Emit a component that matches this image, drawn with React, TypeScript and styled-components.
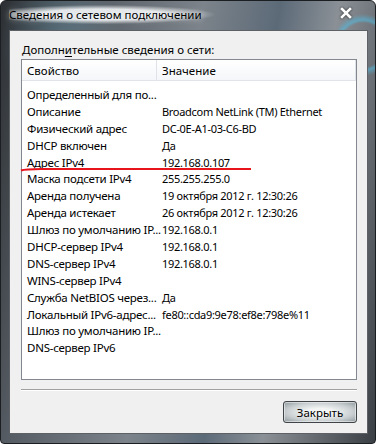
import styled, { createGlobalStyle } from "styled-components";

const GlobalStyle = createGlobalStyle`
  html, body {
    margin: 0;
    padding: 0;
    background: #ffffff;
  }
  * {
    box-sizing: border-box;
  }
`;

const rows: [string, string][] = [
  ["Определенный для по...", ""],
  ["Описание", "Broadcom NetLink (TM) Ethernet"],
  ["Физический адрес", "DC-0E-A1-03-C6-BD"],
  ["DHCP включен", "Да"],
  ["Адрес IPv4", "192.168.0.107"],
  ["Маска подсети IPv4", "255.255.255.0"],
  ["Аренда получена", "19 октября 2012 г. 12:30:26"],
  ["Аренда истекает", "26 октября 2012 г. 12:30:26"],
  ["Шлюз по умолчанию IP...", "192.168.0.1"],
  ["DHCP-сервер IPv4", "192.168.0.1"],
  ["DNS-сервер IPv4", "192.168.0.1"],
  ["WINS-сервер IPv4", ""],
  ["Служба NetBIOS через...", "Да"],
  ["Локальный IPv6-адрес...", "fe80::cda9:9e78:ef8e:798e%11"],
  ["Шлюз по умолчанию IP...", ""],
  ["DNS-сервер IPv6", ""],
];

const Window = styled.div`
  position: relative;
  width: 376px;
  height: 444px;
  display: flex;
  flex-direction: column;
  padding: 0 7px 9px 8px;
  border: 1px solid #1c1f22;
  border-radius: 6px 6px 4px 4px;
  background:
    radial-gradient(circle at 362px 44px, transparent 22px, rgba(80, 190, 230, 0.55) 25px, transparent 31px),
    radial-gradient(ellipse at 60px 40px, rgba(120, 200, 230, 0.25), transparent 60px),
    linear-gradient(100deg, #2c3034 0%, #555b62 18%, #7c838a 45%, #5c6a78 62%, #8a9096 75%, #3a3f45 100%);
  font-family: "Noto Sans", "Open Sans", sans-serif;
  font-size: 11.5px;
  color: #000;
`;

const TitleBar = styled.div`
  height: 29px;
  display: flex;
  align-items: center;
  justify-content: space-between;
`;

const Title = styled.span`
  font-size: 11.5px;
  color: #000;
  padding: 2px 12px 2px 0;
  margin-top: -2px;
  background: radial-gradient(ellipse at 45% 50%, rgba(235, 238, 240, 0.95) 40%, rgba(220, 224, 228, 0) 72%);
  text-shadow: 0 0 6px rgba(255, 255, 255, 0.9);
`;

const CloseIcon = styled.svg`
  width: 12px;
  height: 12px;
  margin-right: 16px;
  margin-top: -6px;
  filter: drop-shadow(0 0 1px #222);
`;

const Client = styled.div`
  flex: 1;
  display: flex;
  flex-direction: column;
  background: #f0f0f0;
  border: 1px solid #5d6166;
  padding: 11px 10px 0 11px;
`;

const Caption = styled.div`
  height: 17px;
  line-height: 16px;
  padding-left: 1px;
  u {
    text-decoration-thickness: 1px;
    text-underline-offset: 2px;
  }
`;

const ListBox = styled.div`
  position: relative;
  height: 321px;
  background: #ffffff;
  border: 1px solid #828790;
`;

const HeaderRow = styled.div`
  display: flex;
  height: 21px;
  background: linear-gradient(#ffffff, #f4f6f9);
  border-bottom: 1px solid #e0e3e8;
`;

const HeaderCell = styled.div<{ $width?: number }>`
  ${(p) => (p.$width ? `width: ${p.$width}px;` : "flex: 1;")}
  line-height: 21px;
  padding-left: 5px;
  border-right: 1px solid #dfe2e7;
  white-space: nowrap;
`;

const Body = styled.div`
  padding-top: 6px;
`;

const Row = styled.div`
  display: flex;
  height: 16.9px;
  line-height: 16.9px;
  white-space: nowrap;
`;

const Cell = styled.div<{ $width?: number; $value?: boolean }>`
  ${(p) => (p.$width ? `width: ${p.$width}px;` : "flex: 1;")}
  padding-left: 5px;
  font-size: ${(p) => (p.$value ? "11px" : "11.5px")};
  letter-spacing: ${(p) => (p.$value ? "-0.3px" : "-0.25px")};
`;

const Annotation = styled.svg`
  position: absolute;
  left: -2px;
  top: 106px;
  width: 232px;
  height: 6px;
`;

const Separator = styled.div`
  margin-top: 9px;
  height: 2px;
  border-top: 1px solid #a0a0a0;
  border-bottom: 1px solid #ffffff;
`;

const Footer = styled.div`
  display: flex;
  justify-content: flex-end;
  padding-top: 10px;
`;

const Button = styled.button`
  width: 74px;
  height: 22px;
  font-family: inherit;
  font-size: 11.5px;
  color: #000;
  border: 1px solid #3e4448;
  border-radius: 3px;
  background: radial-gradient(ellipse at 50% 50%, #f3f5f5 25%, #c9cfd1 65%, #8e979b 100%);
  box-shadow: inset 0 0 0 1px rgba(255, 255, 255, 0.5);
  padding: 0;
`;

export default function App() {
  return (
    <>
      <GlobalStyle />
      <Window>
        <TitleBar>
          <Title>Сведения о сетевом подключении</Title>
          <CloseIcon viewBox="0 0 12 12">
            <path d="M2 2 L10 10 M10 2 L2 10" stroke="#ffffff" strokeWidth="2.6" strokeLinecap="square" />
          </CloseIcon>
        </TitleBar>
        <Client>
          <Caption>
            Дополн<u>и</u>тельные сведения о сети:
          </Caption>
          <ListBox>
            <HeaderRow>
              <HeaderCell $width={135}>Свойство</HeaderCell>
              <HeaderCell>Значение</HeaderCell>
            </HeaderRow>
            <Body>
              {rows.map(([name, value], i) => (
                <Row key={i}>
                  <Cell $width={135}>{name}</Cell>
                  <Cell $value>{value}</Cell>
                </Row>
              ))}
            </Body>
            <Annotation viewBox="0 0 232 6">
              <path d="M1 4.5 Q 6 2.5 30 3 L 231 3" stroke="#e8141c" strokeWidth="2" fill="none" />
            </Annotation>
          </ListBox>
          <Separator />
          <Footer>
            <Button>Закрыть</Button>
          </Footer>
        </Client>
      </Window>
    </>
  );
}
